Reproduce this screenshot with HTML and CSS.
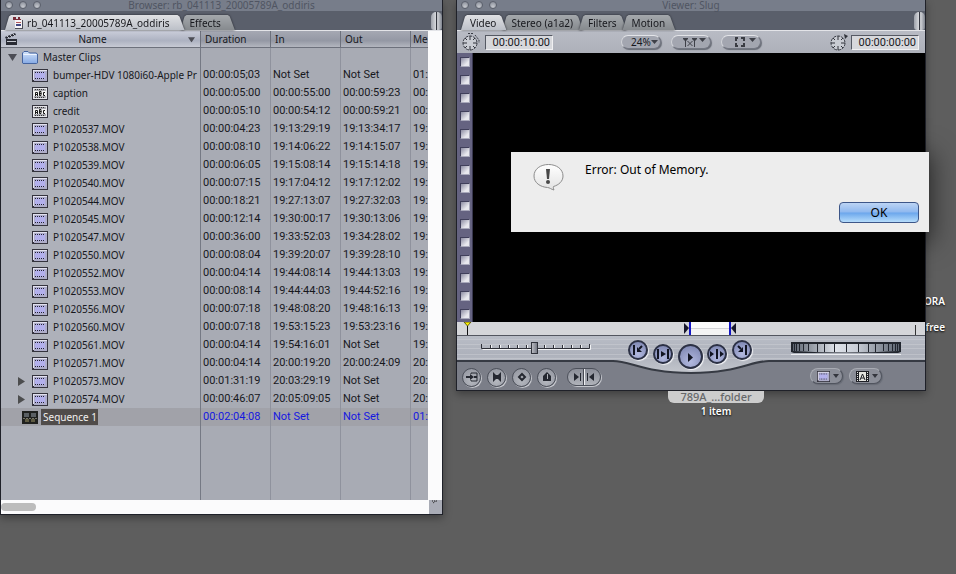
FILE: index.html
```html
<!DOCTYPE html>
<html lang="en">
<head>
<meta charset="utf-8">
<title>Browser and Viewer</title>
<link rel="stylesheet" href="styles.css">
</head>
<body>
<svg class="defs" aria-hidden="true">
  <defs>
    <linearGradient id="gFolder" x1="0" y1="0" x2="0" y2="1"><stop offset="0" stop-color="#d3e4fb"/><stop offset="1" stop-color="#85a9e4"/></linearGradient>
    <linearGradient id="gMetal" x1="0" y1="0" x2="0" y2="1"><stop offset="0" stop-color="#b9bdc6"/><stop offset="0.5" stop-color="#adb1bb"/><stop offset="1" stop-color="#c3c6cd"/></linearGradient>
    <linearGradient id="gWheel" x1="0" x2="1"><stop offset="0" stop-color="#5c6470"/><stop offset="0.4" stop-color="#dfe3ea"/><stop offset="0.6" stop-color="#c9ced7"/><stop offset="1" stop-color="#5c6470"/></linearGradient>
    <linearGradient id="gBubble" x1="0" y1="0" x2="0" y2="1"><stop offset="0" stop-color="#ffffff"/><stop offset="1" stop-color="#e2e2e2"/></linearGradient>
  </defs>
  <symbol id="clip" viewBox="0 0 16 13"><path fill="#34333d" d="M0 0h16v13H0z"/><path fill="#e2e1ef" d="M1 1h14v10H1z"/><path fill="#aeadc9" d="M2 2h13v10H2z"/><path fill="#b3b0ec" d="M3 3h10v7H3z"/><path stroke="#24242f" stroke-dasharray="1 1" d="M3 3.500h10M3 9.500h10"/></symbol>
  <symbol id="text" viewBox="0 0 16 13"><path fill="#34333d" d="M0 0h16v13H0z"/><path fill="#e6e6ea" d="M1 1h14v11H1z"/><path fill="#ababb2" d="M2 2h12v9H2z"/><path fill="#f4f4f4" d="M2 4h12v5H2z"/><path fill="none" stroke="#171717" d="M3.500 9V5.500h2V9M3.500 7.500h2M7.500 4.500v4h1.500v-4zM7.500 6.500h2M13 5.500h-1.500v3H13"/><path stroke="#333" stroke-dasharray="1 1" d="M3 2.500h10M3 10.500h10"/></symbol>
  <symbol id="sequence" viewBox="0 0 16 13"><path fill="#20211f" d="M0 0h16v13H0z"/><path fill="#5b6064" d="M2 2h5v4H2zM9 2h5v4H9z"/><path fill="#5e5b43" d="M3 8h4v3H3zM9 8h4v3H9z"/><path stroke="#77756a" d="M1 7.500h14" stroke-dasharray="2 1"/></symbol>
  <symbol id="folder" viewBox="0 0 16 13"><path d="M.5 12V2L2 .5h4L7.500 2H14l1.500 1v9l-1 .5H1z" fill="url(#gFolder)" stroke="#46659f"/><path stroke="#eef5ff" d="M1.500 3.500h13"/></symbol>
  <symbol id="down" viewBox="0 0 9 8"><path fill="#4c4d55" d="M0 1h9L4.500 8z"/></symbol>
  <symbol id="right" viewBox="0 0 7 9"><path fill="#4c4d4e" d="M0 0l7 4.500L0 9z"/></symbol>
  <symbol id="watch" viewBox="0 0 20 20"><circle cx="9" cy="11" r="7" fill="#c9ccd3" stroke="#393c45" stroke-dasharray="3 1"/><path stroke="#30333b" d="M9 4v4M9 14v4M2 11h4M12 11h4M4 6l2 2M14 6l-2 2M4 16l2-2M14 16l-2-2"/></symbol>
</svg>
<main class="desktop">
  <div class="icon-label disk"><span>ORA</span><span class="free">free</span></div>

  <section class="window browser" aria-label="Browser">
    <header class="titlebar"><span class="lights"><i></i><i></i><i></i></span><h1>Browser: rb_041113_20005789A_oddiris</h1></header>
    <nav class="tabs">
      <button class="tab active project" type="button"><svg width="10" height="12" viewBox="0 0 10 12" aria-hidden="true"><path fill="#f7f5f7" d="M2 3h7v8H2z"/><path fill="#762b38" d="M0 0h3v2h2V0h2v2h1v1H0z"/><path stroke="#b55a5a" d="M3 5.500h5"/><path stroke="#454a83" stroke-width="2" d="M3 8h5"/><path stroke="#4b4d58" d="M9.500 3v9M2 11.500h7"/></svg>rb_041113_20005789A_oddiris</button>
      <button class="tab effects" type="button">Effects</button>
      <span class="cap"></span>
    </nav>
    <div class="list">
      <table>
        <colgroup><col class="c-name"><col class="c-time"><col class="c-time"><col class="c-time"><col></colgroup>
        <thead><tr>
          <th><div class="namehead"><svg width="12" height="12" viewBox="0 0 12 12" aria-hidden="true"><path fill="#292b34" d="M0 4l10-4 1 2L1 6zM1 6h11v6H1z"/><path stroke="#c4c7cf" d="M2 3l2 2M5 2l2 2M8 1l2 2M2 8.500h9"/></svg><span>Name</span><svg width="7" height="7" viewBox="0 0 9 8" aria-hidden="true"><use href="#down"/></svg></div></th>
          <th>Duration</th><th>In</th><th>Out</th><th>Me</th>
        </tr></thead>
        <tbody>
          <tr><td><div class="item"><span class="twist"><svg width="9" height="8"><use href="#down"/></svg></span><svg width="16" height="13"><use href="#folder"/></svg><span>Master Clips</span></div></td><td></td><td></td><td></td><td></td></tr>
          <tr><td><div class="item child"><span class="twist"></span><svg width="16" height="13"><use href="#clip"/></svg><span>bumper-HDV 1080i60-Apple Pr</span></div></td><td>00:00:05;03</td><td>Not Set</td><td>Not Set</td><td>01:</td></tr>
          <tr><td><div class="item child"><span class="twist"></span><svg width="16" height="13"><use href="#text"/></svg><span>caption</span></div></td><td>00:00:05:00</td><td>00:00:55:00</td><td>00:00:59:23</td><td>00:</td></tr>
          <tr><td><div class="item child"><span class="twist"></span><svg width="16" height="13"><use href="#text"/></svg><span>credit</span></div></td><td>00:00:05:10</td><td>00:00:54:12</td><td>00:00:59:21</td><td>00:</td></tr>
          <tr><td><div class="item child"><span class="twist"></span><svg width="16" height="13"><use href="#clip"/></svg><span>P1020537.MOV</span></div></td><td>00:00:04:23</td><td>19:13:29:19</td><td>19:13:34:17</td><td>19:</td></tr>
          <tr><td><div class="item child"><span class="twist"></span><svg width="16" height="13"><use href="#clip"/></svg><span>P1020538.MOV</span></div></td><td>00:00:08:10</td><td>19:14:06:22</td><td>19:14:15:07</td><td>19:</td></tr>
          <tr><td><div class="item child"><span class="twist"></span><svg width="16" height="13"><use href="#clip"/></svg><span>P1020539.MOV</span></div></td><td>00:00:06:05</td><td>19:15:08:14</td><td>19:15:14:18</td><td>19:</td></tr>
          <tr><td><div class="item child"><span class="twist"></span><svg width="16" height="13"><use href="#clip"/></svg><span>P1020540.MOV</span></div></td><td>00:00:07:15</td><td>19:17:04:12</td><td>19:17:12:02</td><td>19:</td></tr>
          <tr><td><div class="item child"><span class="twist"></span><svg width="16" height="13"><use href="#clip"/></svg><span>P1020544.MOV</span></div></td><td>00:00:18:21</td><td>19:27:13:07</td><td>19:27:32:03</td><td>19:</td></tr>
          <tr><td><div class="item child"><span class="twist"></span><svg width="16" height="13"><use href="#clip"/></svg><span>P1020545.MOV</span></div></td><td>00:00:12:14</td><td>19:30:00:17</td><td>19:30:13:06</td><td>19:</td></tr>
          <tr><td><div class="item child"><span class="twist"></span><svg width="16" height="13"><use href="#clip"/></svg><span>P1020547.MOV</span></div></td><td>00:00:36:00</td><td>19:33:52:03</td><td>19:34:28:02</td><td>19:</td></tr>
          <tr><td><div class="item child"><span class="twist"></span><svg width="16" height="13"><use href="#clip"/></svg><span>P1020550.MOV</span></div></td><td>00:00:08:04</td><td>19:39:20:07</td><td>19:39:28:10</td><td>19:</td></tr>
          <tr><td><div class="item child"><span class="twist"></span><svg width="16" height="13"><use href="#clip"/></svg><span>P1020552.MOV</span></div></td><td>00:00:04:14</td><td>19:44:08:14</td><td>19:44:13:03</td><td>19:</td></tr>
          <tr><td><div class="item child"><span class="twist"></span><svg width="16" height="13"><use href="#clip"/></svg><span>P1020553.MOV</span></div></td><td>00:00:08:14</td><td>19:44:44:03</td><td>19:44:52:16</td><td>19:</td></tr>
          <tr><td><div class="item child"><span class="twist"></span><svg width="16" height="13"><use href="#clip"/></svg><span>P1020556.MOV</span></div></td><td>00:00:07:18</td><td>19:48:08:20</td><td>19:48:16:13</td><td>19:</td></tr>
          <tr><td><div class="item child"><span class="twist"></span><svg width="16" height="13"><use href="#clip"/></svg><span>P1020560.MOV</span></div></td><td>00:00:07:18</td><td>19:53:15:23</td><td>19:53:23:16</td><td>19:</td></tr>
          <tr><td><div class="item child"><span class="twist"></span><svg width="16" height="13"><use href="#clip"/></svg><span>P1020561.MOV</span></div></td><td>00:00:04:14</td><td>19:54:16:01</td><td>Not Set</td><td>19:</td></tr>
          <tr><td><div class="item child"><span class="twist"></span><svg width="16" height="13"><use href="#clip"/></svg><span>P1020571.MOV</span></div></td><td>00:00:04:14</td><td>20:00:19:20</td><td>20:00:24:09</td><td>20:</td></tr>
          <tr><td><div class="item child"><span class="twist"><svg width="7" height="9"><use href="#right"/></svg></span><svg width="16" height="13"><use href="#clip"/></svg><span>P1020573.MOV</span></div></td><td>00:01:31:19</td><td>20:03:29:19</td><td>Not Set</td><td>20:</td></tr>
          <tr><td><div class="item child"><span class="twist"><svg width="7" height="9"><use href="#right"/></svg></span><svg width="16" height="13"><use href="#clip"/></svg><span>P1020574.MOV</span></div></td><td>00:00:46:07</td><td>20:05:09:05</td><td>Not Set</td><td>20:</td></tr>
          <tr class="selected"><td><div class="item"><span class="twist"></span><svg width="16" height="13"><use href="#sequence"/></svg><span class="chosen">Sequence 1</span></div></td><td>00:02:04:08</td><td>Not Set</td><td>Not Set</td><td>01:</td></tr>
          <tr class="blank"><td></td><td></td><td></td><td></td><td></td></tr>
        </tbody>
      </table>
      <div class="vscroll"></div>
    </div>
    <footer class="hscroll"><span class="knob"></span><span class="grow"><svg width="13" height="13" viewBox="0 0 13 13" aria-hidden="true"><path stroke="#222" stroke-dasharray="1 1" d="M3 1h5M4 3l3-2"/></svg></span></footer>
  </section>

  <section class="window viewer" aria-label="Viewer">
    <header class="titlebar"><span class="lights"><i></i><i></i><i></i></span><h2>Viewer: Slug</h2></header>
    <nav class="tabs">
      <button class="tab active" type="button">Video</button>
      <button class="tab" type="button">Stereo (a1a2)</button>
      <button class="tab" type="button">Filters</button>
      <button class="tab" type="button">Motion</button>
      <span class="cap"></span>
    </nav>
    <div class="toolbar">
      <div class="group"><svg width="20" height="20" aria-hidden="true"><use href="#watch"/><path fill="none" stroke="#393c45" stroke-dasharray="2 1" d="M7 1.500h6M14 3l4 5v3"/></svg><input class="timecode" type="text" value="00:00:10:00" aria-label="Duration"></div>
      <div class="group pills">
        <span class="pill zoom"><select aria-label="Zoom"><option>24%</option></select><svg width="7" height="4" aria-hidden="true"><path fill="#3e4048" d="M0 0h7L3.500 4z"/></svg></span>
        <button class="pill" type="button" aria-label="Playhead sync"><svg width="28" height="12" viewBox="0 0 28 12" aria-hidden="true"><path fill="#3e4048" d="M5 2h5v1L8 5v6H7V5L5 3zM14 2h5v1l-2 2v6h-1V5l-2-2zM21 2h7l-3.500 4z"/><path stroke="#3e4048" d="M9.500 5l5 5M14.500 5l-5 5"/></svg></button>
        <button class="pill" type="button" aria-label="View"><svg width="28" height="12" viewBox="0 0 28 12" aria-hidden="true"><path fill="none" stroke="#393b42" stroke-width="2" d="M10 2H8v3M13 2h3v3M8 7v3h2M16 7v3h-3"/><path fill="#3e4048" d="M21 2h7l-3.500 4z"/></svg></button>
      </div>
      <div class="group last"><svg width="20" height="20" aria-hidden="true"><use href="#watch"/><path fill="#30333b" d="M15 2l4 2-3 3z"/></svg><input class="timecode" type="text" value="00:00:00:00" aria-label="Current timecode"></div>
    </div>
    <div class="picture">
      <div class="film"><i></i><i></i><i></i><i></i><i></i><i></i><i></i><i></i><i></i><i></i><i></i><i></i><i></i><i></i><i></i></div>
    </div>
    <div class="scrub">
      <svg class="playhead" width="9" height="13" aria-hidden="true"><path d="M1 0h7L4.500 4z" fill="#fff200" stroke="#62600c"/><path stroke="#111" d="M4.500 4v9"/></svg>
      <div class="range"><svg width="7" height="13" aria-hidden="true"><path fill="#17172b" d="M0 1l5 5-5 6z"/><path fill="#1416c4" d="M5 0h2v13H5z"/></svg><span></span><svg width="7" height="13" aria-hidden="true"><path fill="#17172b" d="M7 1L2 6l5 6z"/><path fill="#1416c4" d="M0 0h2v13H0z"/></svg></div>
      <span class="end"></span>
    </div>
    <div class="controls">
      <svg class="metal" viewBox="0 0 468 54" preserveAspectRatio="none" aria-hidden="true"><path fill="url(#gMetal)" d="M0 0H468V25H312C294 25 280 37 234 37S174 25 156 25H0z"/><path stroke="#cdd0d6" stroke-opacity=".5" d="M0 3.500h468M0 8.500h468M0 12.500h468M0 18.500h468M0 22.500h468"/><path fill="none" stroke="#363a43" stroke-width="2" d="M0 25H156C174 25 188 37 234 37S294 25 312 25H468"/></svg>
      <div class="side left">
        <div class="shuttle">
          <svg width="110" height="14" viewBox="0 0 110 14" aria-hidden="true"><path fill="none" stroke="#f2f3f5" d="M1.500 7.500h108V3M10.500 3v3M19.500 3v3M28.500 3v3M37.500 3v3M46.500 3v3M64.500 3v3M73.500 3v3M82.500 3v3M91.500 3v3M100.500 3v3"/><path fill="none" stroke="#2e3038" d="M.5 2v4.500h108V2M9.500 3v3M18.500 3v3M27.500 3v3M36.500 3v3M45.500 3v3M63.500 3v3M72.500 3v3M81.500 3v3M90.500 3v3M99.500 3v3"/></svg>
          <input type="range" min="0" max="100" value="49" aria-label="Shuttle">
        </div>
        <div class="lower">
          <button class="round" type="button" aria-label="Match frame"><svg width="12" height="12"><path fill="none" stroke="#252831" d="M5 3V2h6v8H5V9"/><path fill="#252831" d="M0 5h4V3l4 3-4 3V7H0zM8 5h3v2H8z"/></svg></button>
          <button class="round" type="button" aria-label="Mark clip"><svg width="12" height="12"><path fill="#252831" d="M2 1l3 3h2l3-3v10L7 8H5l-3 3z"/></svg></button>
          <button class="round" type="button" aria-label="Add keyframe"><svg width="12" height="12"><path fill="none" stroke="#252831" stroke-width="2" d="M6 3l3 3-3 3-3-3z"/></svg></button>
          <button class="round" type="button" aria-label="Add marker"><svg width="12" height="12"><path fill="#252831" d="M6 1l4 4v5H2V5z"/><path stroke="#aeb1b8" d="M6.500 3v5"/></svg></button>
          <button class="double" type="button" aria-label="Mark in and mark out"><svg width="32" height="16"><path fill="#252831" d="M6 4l5 4-5 4zM12 4h1v8h-1zM19 4h1v8h-1zM26 4l-5 4 5 4z"/><path stroke="#eff0f3" d="M16.500 0v16"/><path stroke="#484b54" d="M15.500 0v16"/></svg></button>
        </div>
      </div>
      <div class="transport">
        <button class="orb" type="button" aria-label="Go to previous edit"><svg width="14" height="14"><path fill="none" stroke="#111422" stroke-width="2" d="M4 3H3v8h1M11 3L8 6"/><path fill="#111422" d="M6 4v5h5z"/></svg></button>
        <button class="orb low" type="button" aria-label="Play in to out"><svg width="14" height="14"><path fill="none" stroke="#111422" stroke-width="2" d="M3 3H2v8h1M11 3h1v8h-1"/><path fill="#111422" d="M5 4l5 3-5 3z"/></svg></button>
        <button class="orb play" type="button" aria-label="Play"><svg width="14" height="14"><path fill="#111422" d="M5 3l5 4.500L5 12z"/></svg></button>
        <button class="orb low" type="button" aria-label="Play around current"><svg width="16" height="14"><path fill="#111422" d="M1 4l4 3-4 3zM11 4l4 3-4 3zM7 2h2v10H7z"/></svg></button>
        <button class="orb" type="button" aria-label="Go to next edit"><svg width="14" height="14"><path fill="none" stroke="#111422" stroke-width="2" d="M10 3h1v8h-1M3 3l3 3"/><path fill="#111422" d="M8 4v5H3z"/></svg></button>
      </div>
      <div class="side right">
        <div class="jog"><svg width="110" height="12" viewBox="0 0 110 12" preserveAspectRatio="none" aria-hidden="true"><path fill="#22262e" d="M0 0h110v10l-3 1H3l-3-1z"/><path fill="url(#gWheel)" d="M2 2h106v7Q55 12 2 9z"/><path stroke="#20242d" d="M3.500 2v7M5.500 2v7M8.500 2v7M12.500 2v7M17.500 2v7M26.500 2v8M33.500 2v8M43.500 2v8M55.500 2v8M67.500 2v8M77.500 2v8M84.500 2v8M92.500 2v7M97.500 2v7M101.500 2v7M104.500 2v7M106.500 2v7"/></svg></div>
        <div class="lower end-row">
          <button class="pill small" type="button" aria-label="Recent clips"><svg width="13" height="11" viewBox="0 0 16 13" preserveAspectRatio="none"><use href="#clip"/></svg><svg width="6" height="4"><path fill="#34363e" d="M0 0h6L3 4z"/></svg></button>
          <button class="pill small" type="button" aria-label="Generators"><svg width="13" height="11" viewBox="0 0 13 11"><path fill="#1e1f25" d="M0 0h13v11H0z"/><path fill="#e5e5e0" d="M3 1h7v9H3z"/><path fill="none" stroke="#1e1f25" d="M4 9l2.500-6L9 9M5 7h3"/><path stroke="#e5e5e0" stroke-dasharray="1 1" d="M1.500 1v9M11.500 1v9"/></svg><svg width="6" height="4"><path fill="#34363e" d="M0 0h6L3 4z"/></svg></button>
        </div>
      </div>
    </div>
  </section>

  <div class="icon-label folder"><span class="plate">789A_...folder</span><span>1 item</span></div>

  <div class="dialog" role="alertdialog" aria-labelledby="msg">
    <svg width="32" height="30" viewBox="0 0 32 30" aria-hidden="true"><path d="M15.500 2.500C7.500 2.500 1 7 1 14s6.500 11 13.500 11.500c2 0 4 2 6.500 2.500-.8-1.500-.8-2.500-.5-3.500 5-1.500 9.500-5 9.500-10.500C30 7 23.500 2.500 15.500 2.500z" fill="url(#gBubble)" stroke="#8c8c8c"/><path fill="#484848" d="M13 7h4l-1 10h-2z"/><circle cx="15" cy="20" r="2" fill="#484848"/></svg>
    <p id="msg">Error: Out of Memory.</p>
    <button class="ok" type="button">OK</button>
  </div>
</main>
</body>
</html>
```
FILE: styles.css
```css
* { box-sizing: border-box; }
body {
  margin: 0;
  background: #5e5e5e;
  font: 10px/14px "Noto Sans", "Open Sans", sans-serif;
  color: #17181d;
}
button, input, select { font: inherit; color: inherit; margin: 0; padding: 0; border: 0; background: none; }
svg { display: block; flex: none; }
.defs { position: absolute; width: 0; height: 0; }

.desktop {
  position: relative;
  min-height: 100vh;
  overflow: hidden;
  display: grid;
  grid-template-columns: 443fr 13fr 470fr 30fr;
  align-items: start;
}
.window { position: relative; min-width: 0; border: 1px solid #1f2129; border-top: 0; box-shadow: 0 3px 8px rgba(0, 0, 0, .35); }
.browser { grid-column: 1; }
.viewer { grid-column: 3; }

/* window chrome */
.titlebar { position: relative; height: 11px; background: #777d8a; }
.titlebar h1, .titlebar h2 { margin: 0; font-size: 10px; line-height: 10px; font-weight: 400; text-align: center; color: #505562; }
.lights { position: absolute; left: 4px; top: 1px; display: flex; gap: 6px; }
.lights i { width: 8px; height: 8px; border-radius: 50%; border: 1px solid #5b606c; background: radial-gradient(circle at 50% 80%, #c5c8ce, #858a95); }
.tabs { display: flex; align-items: flex-end; height: 20px; padding-left: 4px; background: #5a5f6b; border-bottom: 1px solid #e3e4e8; }
.tab { position: relative; z-index: 1; height: 15px; margin-right: -4px; padding: 0 10px 0 9px; line-height: 14px; white-space: nowrap; filter: drop-shadow(0 0 1px #24272f); }
.tab::before { content: ""; position: absolute; inset: 0; z-index: -1; background: linear-gradient(#a4a8ac, #868a8e); clip-path: polygon(0 100%, 4px 10%, 6px 0, calc(100% - 7px) 0, calc(100% - 5px) 10%, 100% 100%); }
.tab.active { z-index: 2; }
.tab.active::before { background: linear-gradient(#e0e1e4, #bcc0c8); }
.project { display: flex; align-items: center; gap: 4px; padding-left: 8px; padding-right: 15px; }
.effects { padding: 0 14px 0 9px; }
.cap { margin-left: auto; width: 11px; height: 18px; border-radius: 5px 5px 3px 3px; background: linear-gradient(90deg, #9da1aa, #d8dade 45%, #33363f 50%, #d1d3d8 60%, #80858f); }

/* clip list */
.list { display: flex; }
table { flex: 1; width: 0; table-layout: fixed; border-collapse: separate; border-spacing: 0; }
.c-name { width: 200px; }
.c-time { width: 70px; }
th { height: 17px; padding: 0 0 0 4px; overflow: hidden; font-weight: 400; text-align: left; white-space: nowrap; background: linear-gradient(#a5a8b3, #9498a4 60%, #b3b6bf); border-right: 1px solid #6d717c; border-bottom: 1px solid #6d717c; }
th:last-child { padding-left: 2px; border-right: 0; }
th:first-child { background: linear-gradient(#cacdd9, #adb2c1 60%, #c7cad4); }
.namehead { display: flex; align-items: center; padding-right: 5px; }
.namehead span { flex: 1; padding-right: 20px; text-align: center; }
td { height: 18px; padding: 0 0 0 2px; overflow: hidden; white-space: nowrap; background: #a8abb4; border-right: 1px solid #8f929d; font: 11px/18px Roboto, "Noto Sans", sans-serif; }
td:first-child { padding: 0; background: #aeb1ba; border-color: #757984; font: inherit; }
td:last-child { border-right: 0; }
.item { display: flex; align-items: center; }
.twist { display: flex; justify-content: flex-end; width: 21px; padding-right: 5px; flex: none; }
.child .twist { width: 31px; padding-right: 7px; }
.item span:last-child { margin-left: 3px; padding: 0 0 0 2px; }
.selected td, .selected td:first-child { background: #a1a2a9; color: #1518e0; }
.item .chosen:last-child { padding: 0 1px 0 2px; background: #504c4a; color: #f2f0ee; line-height: 16px; }
.blank td { height: 74px; }
.vscroll { width: 14px; background: #fbfbfc; }
.hscroll { display: flex; align-items: center; height: 14px; background: #fbfbfc; }
.knob { width: 35px; height: 8px; border-radius: 4px; background: #bcbcbc; }
.grow { margin-left: auto; width: 13px; height: 14px; background: #a9acb6; }

/* viewer */
.toolbar { display: flex; align-items: center; justify-content: space-between; height: 22px; padding: 0 6px 0 4px; background: linear-gradient(#b8bbc4, #adb0b9); }
.group { display: flex; align-items: center; gap: 4px; }
.group.last { gap: 2px; }
.pills { gap: 10px; }
.timecode { width: 68px; height: 15px; padding: 0 2px 0 0; text-align: right; background: #d7d8dc; border: 1px solid #f0f0f2; border-top-color: #555963; border-left-color: #555963; font: 11px/13px Roboto, sans-serif; }
.pill { display: flex; align-items: center; width: 40px; height: 14px; padding: 0 6px; border-radius: 7px; background: #a3a6b0; border: 1px solid #747883; border-top-color: #e3e4e8; border-left-color: #d3d5da; box-shadow: 1px 1px 1px #686c76; }
.pill.zoom { padding: 0 3px 0 9px; }
.zoom select { appearance: none; width: 21px; }
.picture { display: flex; height: 269px; background: #000; }
.film { display: flex; flex-direction: column; align-items: center; gap: 8px; width: 16px; padding-top: 4px; background: #656381; border-right: 1px solid #393850; }
.film i { flex: none; width: 10px; height: 10px; border: 1px solid #403f5b; border-right-color: #a9a9bb; border-bottom-color: #a9a9bb; background: linear-gradient(135deg, #8c8ca2, #e8e8ee 70%); }
.scrub { position: relative; height: 14px; background: #d5d6d9; border-bottom: 1px solid #53565f; }
.playhead { position: absolute; left: 6px; top: 0; }
.range { position: absolute; left: 48.5%; top: 0; width: 52px; display: flex; }
.range span { flex: 1; background: linear-gradient(#fafafa 6px, #d2d2d5 6px, #d2d2d5 7px, #f4f4f4 7px); }
.end { position: absolute; right: 9px; bottom: 0; width: 1px; height: 10px; background: #333; }

.controls { position: relative; display: grid; grid-template-columns: 1fr 124px 1fr; height: 54px; background: #7b7e88; }
.metal { position: absolute; inset: 0; width: 100%; height: 100%; }
.side { position: relative; display: flex; flex-direction: column; gap: 11px; padding-top: 6px; }
.right { align-items: flex-end; padding-right: 24px; }
.left { padding-left: 5px; }
.shuttle { display: grid; margin-left: 19px; height: 14px; width: 110px; }
.shuttle > * { grid-area: 1 / 1; }
.shuttle input { appearance: none; width: 110px; height: 12px; }
.shuttle input::-webkit-slider-thumb { appearance: none; width: 7px; height: 12px; border: 1px solid #30333c; background: linear-gradient(90deg, #b8bac1, #777b86); }
.lower { display: flex; align-items: center; gap: 6px; height: 20px; }
.round { display: grid; place-items: center; width: 19px; height: 19px; border-radius: 50%; border: 1px solid #4c505a; background: radial-gradient(circle at 50% 70%, #b5b8bf, #8f929c); box-shadow: 1px 1px 0 #c4c6cc; }
.double { width: 34px; height: 18px; margin-left: 5px; border-radius: 9px; border: 1px solid #4c505a; background: linear-gradient(#8b8e98, #afb2b9); box-shadow: 1px 1px 0 #c4c6cc; }
.transport { position: relative; display: flex; align-items: flex-start; justify-content: space-between; padding: 4px 1px 0 0; margin-left: -1px; }
.orb { display: grid; place-items: center; width: 20px; height: 20px; border-radius: 50%; border: 2px solid #2c3145; background: radial-gradient(circle at 50% 75%, #b3bae0, #7780ac); box-shadow: 1px 1px 1px #f4f5f8; }
.orb.low { margin-top: 4px; }
.orb.play { width: 25px; height: 25px; margin-top: 4px; }
.jog { width: 110px; height: 13px; border-bottom: 1px solid #eceef1; }
.end-row { padding-right: 19px; }
.pill.small { width: 33px; height: 16px; gap: 3px; padding: 0 4px 0 6px; border-radius: 8px; background: #8b8e98; border-color: #a8abb3 #50545e #50545e #a8abb3; }

/* items lying on the desktop */
.icon-label { position: absolute; display: flex; flex-direction: column; align-items: center; color: #fff; font-size: 10px; font-weight: 600; text-shadow: 0 1px 2px #000; }
.disk { right: 11px; top: 294px; align-items: flex-end; gap: 12px; }
.folder { left: 668px; top: 391px; width: 96px; }
.plate { width: 96px; height: 12px; line-height: 12px; margin-bottom: 1px; text-align: center; font-size: 11px; font-weight: 500; color: #66686a; background: #cdcdcd; border-radius: 0 0 6px 6px; text-shadow: none; }

.dialog { position: absolute; left: 511px; right: 27px; top: 152px; min-height: 80px; display: grid; grid-template-columns: 32px 1fr auto; column-gap: 20px; padding: 10px 10px 9px 22px; background: #ededed; box-shadow: 0 6px 24px 4px rgba(0, 0, 0, .5); }
.dialog p { margin: 0; font-size: 12px; line-height: 16px; color: #000; }
.ok { grid-column: 3; align-self: end; width: 80px; height: 21px; border: 1px solid #3d5688; border-radius: 4px; font-size: 12px; line-height: 18px; color: #000; background: linear-gradient(#bcd4f4, #8fb8ef 48%, #6ba6ec 52%, #b5dcfb); }
```
